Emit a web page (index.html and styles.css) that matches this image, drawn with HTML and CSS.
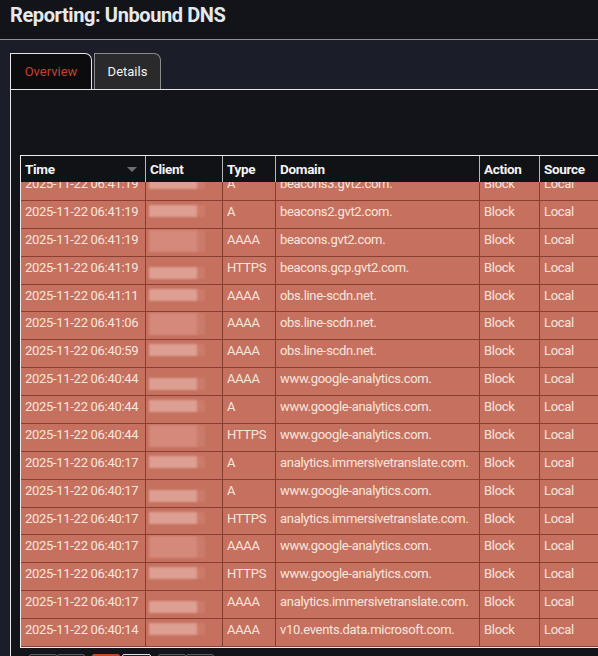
FILE: index.html
```html
<!DOCTYPE html>
<html lang="en">
<head>
<meta charset="utf-8">
<title>Reporting: Unbound DNS</title>
<link rel="stylesheet" href="styles.css">
</head>
<body>
<header class="topbar"><h1 class="title">Reporting: Unbound DNS</h1></header>
<main class="page">
  <nav class="tabs">
    <a class="tab tab-active">Overview</a>
    <a class="tab tab-other">Details</a>
  </nav>
  <section class="panel">
    <div class="grid">
      <div class="row head">
        <div class="cell">Time<span class="sort"></span></div>
        <div class="cell">Client</div>
        <div class="cell">Type</div>
        <div class="cell">Domain</div>
        <div class="cell">Action</div>
        <div class="cell">Source</div>
      </div>
      <div class="body">
        <div class="rows">
          <div class="row item"><div class="cell">2025-11-22 06:41:19</div><div class="cell client"><span class="blur"></span></div><div class="cell">A</div><div class="cell">beacons3.gvt2.com.</div><div class="cell">Block</div><div class="cell">Local</div></div>
          <div class="row item"><div class="cell">2025-11-22 06:41:19</div><div class="cell client"><span class="blur"></span></div><div class="cell">A</div><div class="cell">beacons2.gvt2.com.</div><div class="cell">Block</div><div class="cell">Local</div></div>
          <div class="row item"><div class="cell">2025-11-22 06:41:19</div><div class="cell client"><span class="blur soft"></span></div><div class="cell">AAAA</div><div class="cell">beacons.gvt2.com.</div><div class="cell">Block</div><div class="cell">Local</div></div>
          <div class="row item"><div class="cell">2025-11-22 06:41:19</div><div class="cell client"><span class="blur low"></span></div><div class="cell">HTTPS</div><div class="cell">beacons.gcp.gvt2.com.</div><div class="cell">Block</div><div class="cell">Local</div></div>
          <div class="row item"><div class="cell">2025-11-22 06:41:11</div><div class="cell client"><span class="blur"></span></div><div class="cell">AAAA</div><div class="cell">obs.line-scdn.net.</div><div class="cell">Block</div><div class="cell">Local</div></div>
          <div class="row item"><div class="cell">2025-11-22 06:41:06</div><div class="cell client"><span class="blur soft"></span></div><div class="cell">AAAA</div><div class="cell">obs.line-scdn.net.</div><div class="cell">Block</div><div class="cell">Local</div></div>
          <div class="row item"><div class="cell">2025-11-22 06:40:59</div><div class="cell client"><span class="blur"></span></div><div class="cell">AAAA</div><div class="cell">obs.line-scdn.net.</div><div class="cell">Block</div><div class="cell">Local</div></div>
          <div class="row item"><div class="cell">2025-11-22 06:40:44</div><div class="cell client"><span class="blur low"></span></div><div class="cell">AAAA</div><div class="cell">www.google-analytics.com.</div><div class="cell">Block</div><div class="cell">Local</div></div>
          <div class="row item"><div class="cell">2025-11-22 06:40:44</div><div class="cell client"><span class="blur"></span></div><div class="cell">A</div><div class="cell">www.google-analytics.com.</div><div class="cell">Block</div><div class="cell">Local</div></div>
          <div class="row item"><div class="cell">2025-11-22 06:40:44</div><div class="cell client"><span class="blur soft"></span></div><div class="cell">HTTPS</div><div class="cell">www.google-analytics.com.</div><div class="cell">Block</div><div class="cell">Local</div></div>
          <div class="row item"><div class="cell">2025-11-22 06:40:17</div><div class="cell client"><span class="blur"></span></div><div class="cell">A</div><div class="cell">analytics.immersivetranslate.com.</div><div class="cell">Block</div><div class="cell">Local</div></div>
          <div class="row item"><div class="cell">2025-11-22 06:40:17</div><div class="cell client"><span class="blur low"></span></div><div class="cell">A</div><div class="cell">www.google-analytics.com.</div><div class="cell">Block</div><div class="cell">Local</div></div>
          <div class="row item"><div class="cell">2025-11-22 06:40:17</div><div class="cell client"><span class="blur"></span></div><div class="cell">HTTPS</div><div class="cell">analytics.immersivetranslate.com.</div><div class="cell">Block</div><div class="cell">Local</div></div>
          <div class="row item"><div class="cell">2025-11-22 06:40:17</div><div class="cell client"><span class="blur soft"></span></div><div class="cell">AAAA</div><div class="cell">www.google-analytics.com.</div><div class="cell">Block</div><div class="cell">Local</div></div>
          <div class="row item"><div class="cell">2025-11-22 06:40:17</div><div class="cell client"><span class="blur"></span></div><div class="cell">HTTPS</div><div class="cell">www.google-analytics.com.</div><div class="cell">Block</div><div class="cell">Local</div></div>
          <div class="row item"><div class="cell">2025-11-22 06:40:17</div><div class="cell client"><span class="blur low"></span></div><div class="cell">AAAA</div><div class="cell">analytics.immersivetranslate.com.</div><div class="cell">Block</div><div class="cell">Local</div></div>
          <div class="row item"><div class="cell">2025-11-22 06:40:14</div><div class="cell client"><span class="blur"></span></div><div class="cell">AAAA</div><div class="cell">v10.events.data.microsoft.com.</div><div class="cell">Block</div><div class="cell">Local</div></div>
        </div>
      </div>
    </div>
    <div class="pager">
      <div class="pgroup"><span class="pbtn"></span><span class="pbtn"></span></div>
      <div class="pgroup pgroup-split"><span class="pbtn pbtn-on"></span><span class="pbtn pbtn-light"></span></div>
      <div class="pgroup"><span class="pbtn"></span><span class="pbtn"></span></div>
    </div>
  </section>
</main>
</body>
</html>
```
FILE: styles.css
```css
html, body {
  margin: 0;
  padding: 0;
}
body {
  background: #1b1d28;
  font-family: Roboto, "Liberation Sans", sans-serif;
  height: 656px;
  overflow: hidden;
}
.topbar {
  height: 39px;
  background: #131419;
  border-bottom: 1px solid #8e9198;
}
.title {
  margin: 0;
  padding-left: 10px;
  font-size: 20px;
  font-weight: 700;
  line-height: 30px;
  color: #e6e9ec;
  letter-spacing: -0.4px;
}
.page {
  padding: 13px 0 0 10px;
}
.tabs {
  display: flex;
  height: 36px;
}
.tab {
  box-sizing: border-box;
  height: 36px;
  border: 1px solid;
  border-bottom: none;
  border-radius: 0 7px 0 0;
  display: flex;
  align-items: center;
  justify-content: center;
  font-size: 13px;
}
.tab-active {
  width: 82px;
  background: #0c0c0e;
  border-color: #e6e6e6;
  color: #c0432f;
}
.tab-other {
  width: 67px;
  margin-left: 2px;
  background: #2a2a2d;
  border-color: #8a8a8c;
  color: #f2f2f2;
}
.panel {
  border-top: 1px solid #e6e6e6;
  border-left: 1px solid #e6e6e6;
  background: #131419;
  padding: 65px 0 0 9px;
}
.grid {
  width: 700px;
  border: 1px solid #ececec;
  border-right: none;
}
.row {
  display: grid;
  grid-template-columns: 125px 77px 53px 204px 60px 181px;
}
.cell {
  box-sizing: border-box;
  padding-left: 4px;
  white-space: nowrap;
  overflow: hidden;
}
.head {
  height: 26px;
  background: #111216;
}
.head .cell {
  border-right: 1px solid #b9b9bc;
  font-weight: 700;
  font-size: 13.5px;
  line-height: 25px;
  color: #f4f4f4;
  letter-spacing: -0.3px;
  display: flex;
  align-items: center;
}
.sort {
  margin-left: auto;
  margin-right: 8px;
  width: 0;
  height: 0;
  border-left: 5px solid transparent;
  border-right: 5px solid transparent;
  border-top: 5px solid #6e6e72;
}
.body {
  height: 465px;
  overflow: hidden;
}
.rows {
  margin-top: -8.9px;
}
.item {
  box-sizing: border-box;
  height: 27.875px;
  background: #c6705f;
  border-bottom: 1px solid #8a3d31;
}
.item .cell {
  border-right: 1px solid #873c30;
  font-size: 13px;
  line-height: 21px;
  color: #f8e6de;
  letter-spacing: -0.3px;
}
.item .client {
  padding-left: 0;
}
.blur {
  display: block;
  margin: 4px 0 0 3px;
  width: 48px;
  height: 12px;
  background: #dd9f91;
  box-shadow: 8px 0 0 #cb7b6a;
  filter: blur(1px);
}
.blur.soft {
  height: 22px;
  margin-top: 1px;
  background: #d4897a;
}
.blur.low {
  margin-top: 10px;
}
.pager {
  display: flex;
  gap: 7px;
  margin: 6px 0 0 9px;
}
.pgroup {
  display: flex;
}
.pgroup-split {
  gap: 2px;
}
.pbtn {
  box-sizing: border-box;
  width: 28px;
  height: 28px;
  border: 1px solid #5a5c62;
  border-radius: 2px;
  background: #1e2029;
}
.pbtn-on {
  background: #c44a25;
  border-color: #c44a25;
}
.pbtn-light {
  width: 29px;
  border-color: #e0e0e0;
}
```
